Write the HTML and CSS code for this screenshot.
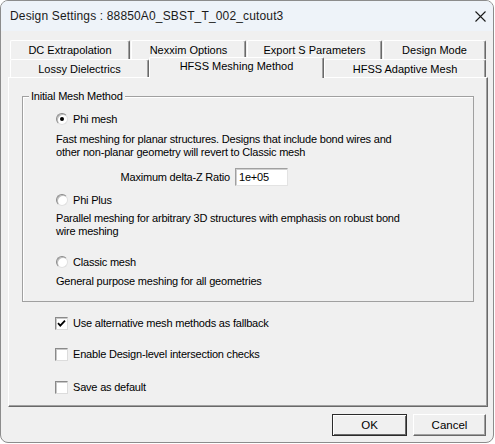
FILE: index.html
```html
<!DOCTYPE html>
<html lang="en">
<head>
  <meta charset="UTF-8" />
  <title>Design Settings</title>
  <link rel="stylesheet" href="styles.css">
</head>
<body>
  <div class="window">
    <div class="titlebar">
      <span>Design Settings : 88850A0_SBST_T_002_cutout3</span>
      <svg class="close" width="11" height="11" viewBox="0 0 11 11">
        <path d="M0.5 0.5 L10.5 10.5 M10.5 0.5 L0.5 10.5" stroke="#1a1a1a" stroke-width="1.1" fill="none" />
      </svg>
    </div>

    <div class="tabs">
      <div class="tab-row back">
        <div class="tab tab-dc">DC Extrapolation</div>
        <div class="tab tab-nexxim">Nexxim Options</div>
        <div class="tab tab-export">Export S Parameters</div>
        <div class="tab tab-mode">Design Mode</div>
      </div>
      <div class="tab-row front">
        <div class="tab tab-lossy">Lossy Dielectrics</div>
        <div class="tab tab-meshing selected">HFSS Meshing Method</div>
        <div class="tab tab-adaptive">HFSS Adaptive Mesh</div>
      </div>
    </div>

    <div class="panel">
      <fieldset class="group">
        <legend>Initial Mesh Method</legend>
        <div class="group-body">
          <div class="option first">
            <span class="radio checked"></span>
            <span>Phi mesh</span>
          </div>
          <p class="desc desc-phi">Fast meshing for planar structures. Designs that include bond wires and<br>other non-planar geometry will revert to Classic mesh</p>
          <div class="ratio-row">
            <span>Maximum delta-Z Ratio</span>
            <span class="field">1e+05</span>
          </div>
          <div class="option plus">
            <span class="radio"></span>
            <span>Phi Plus</span>
          </div>
          <p class="desc desc-plus">Parallel meshing for arbitrary 3D structures with emphasis on robust bond<br>wire meshing</p>
          <div class="option classic">
            <span class="radio"></span>
            <span>Classic mesh</span>
          </div>
          <p class="desc desc-classic">General purpose meshing for all geometries</p>
        </div>
      </fieldset>

      <div class="check check-fallback">
        <span class="box">
          <svg width="9" height="9" viewBox="0 0 9 9">
            <path d="M1 4.2 L3.3 6.6 L8 1.6" stroke="#000" stroke-width="1.8" fill="none" />
          </svg>
        </span>
        <span>Use alternative mesh methods as fallback</span>
      </div>
      <div class="check check-intersect">
        <span class="box"></span>
        <span>Enable Design-level intersection checks</span>
      </div>
      <div class="check check-default">
        <span class="box"></span>
        <span>Save as default</span>
      </div>
    </div>

    <div class="buttons">
      <button class="default">OK</button>
      <button class="cancel">Cancel</button>
    </div>
  </div>
</body>
</html>
```

FILE: styles.css
```css
body {
  margin: 0;
  background: #ffffff;
  color: #000;
  font-family: 'Liberation Sans', Arial, sans-serif;
  font-size: 11px;
  letter-spacing: -0.2px;
}

.window {
  width: 492px;
  height: 441px;
  border: 1px solid #8c8c8c;
  border-radius: 8px;
  background: #f0f0f0;
  overflow: hidden;
}

.titlebar {
  height: 30px;
  background: #eef3f9;
  display: flex;
  align-items: center;
  justify-content: space-between;
  padding: 0 7px 0 9px;
  font-size: 12px;
  letter-spacing: 0.15px;
  color: #1a1a1a;
}

.close {
  display: block;
}

/* tab strip, two rows */
.tabs {
  padding: 9px 0 0 9px;
}

.tab-row {
  display: flex;
  align-items: flex-start;
}

.tab-row.back {
  gap: 1px;
}

.tab {
  box-sizing: border-box;
  text-align: center;
  line-height: 14px;
  background: #f0f0f0;
  border-top: 1px solid #fff;
  border-left: 1px solid #fff;
  border-right: 1px solid #696969;
  box-shadow: inset -1px 0 #a0a0a0;
  border-radius: 2px 2px 0 0;
  white-space: nowrap;
  letter-spacing: 0;
}

.back .tab {
  height: 19px;
  padding-top: 2px;
}

.front .tab {
  height: 18px;
  padding-top: 2px;
}

.front .tab.selected {
  position: relative;
  z-index: 1;
  height: 21px;
  margin-top: -2px;
  margin-bottom: -1px;
  padding-top: 1px;
}

.tab-dc { width: 120px; }
.tab-nexxim { width: 115px; }
.tab-export { width: 135px; }
.tab-mode { width: 103px; }
.tab-lossy { width: 139px; }
.tab-meshing { width: 175px; }
.tab-adaptive { width: 162px; }

.panel {
  box-sizing: border-box;
  width: 480px;
  height: 330px;
  margin-left: 7px;
  border: 1px solid;
  border-color: #fff #696969 #696969 #fff;
  box-shadow: inset -1px -1px #a0a0a0;
  padding: 11px 0 0 13px;
}

.group {
  box-sizing: border-box;
  width: 452px;
  margin: 0;
  padding: 0 6px 13px;
  border: 1px solid #a0a0a0;
  box-shadow: inset 1px 1px #fff;
}

.group legend {
  padding: 0 2px;
  line-height: 14px;
  background: #f0f0f0;
}

.group-body {
  padding-left: 27px;
}

.option {
  display: flex;
  align-items: center;
  gap: 5px;
  height: 14px;
  line-height: 14px;
}

.option.first { margin-top: 9px; }
.option.plus { margin-top: 7px; }
.option.classic { margin-top: 17px; }

.radio {
  box-sizing: border-box;
  width: 12px;
  height: 12px;
  border-radius: 50%;
  background: #fff;
  border: 1px solid;
  border-color: #8a8a8a #e0e0e0 #e0e0e0 #8a8a8a;
  box-shadow: inset 1px 1px #bdbdbd;
  display: flex;
  align-items: center;
  justify-content: center;
}

.radio.checked::after {
  content: "";
  width: 4px;
  height: 4px;
  border-radius: 50%;
  background: #000;
}

.desc {
  margin: 0;
  line-height: 13px;
}

.desc-phi { margin-top: 7px; }
.desc-plus { margin-top: 5px; }
.desc-classic { margin-top: 6px; }

.ratio-row {
  width: 232px;
  height: 18px;
  margin-top: 9px;
  display: flex;
  align-items: center;
  justify-content: flex-end;
  gap: 5px;
}

.field {
  box-sizing: border-box;
  width: 53px;
  height: 18px;
  line-height: 16px;
  padding-left: 3px;
  background: #fff;
  border: 1px solid;
  border-color: #a0a0a0 #e3e3e3 #e3e3e3 #a0a0a0;
  box-shadow: inset 1px 1px #cfcfcf;
}

/* checkboxes below the group */
.check {
  display: flex;
  align-items: center;
  gap: 5px;
  height: 14px;
  line-height: 14px;
  margin-left: 33px;
}

.check-fallback { margin-top: 14px; }
.check-intersect { margin-top: 17px; }
.check-default { margin-top: 19px; }

.box {
  box-sizing: border-box;
  width: 13px;
  height: 13px;
  background: #fff;
  border: 1px solid;
  border-color: #8a8a8a #dcdcdc #dcdcdc #8a8a8a;
  box-shadow: inset 1px 1px #c8c8c8;
  display: flex;
  align-items: center;
  justify-content: center;
}

.box svg {
  display: block;
}

.buttons {
  display: flex;
  justify-content: flex-end;
  gap: 6px;
  padding: 7px 7px 0 0;
}

button {
  box-sizing: border-box;
  height: 22px;
  font-family: inherit;
  font-size: 11.5px;
  color: #000;
  background: #f0f0f0;
  padding: 0;
  border: 1px solid;
  border-color: #fff #696969 #696969 #fff;
  box-shadow: inset -1px -1px #a0a0a0;
}

button.default {
  width: 75px;
  border-color: #2b2b2b;
  box-shadow: inset 1px 1px #fff, inset -1px -1px #696969;
}

button.cancel {
  width: 73px;
}
```
